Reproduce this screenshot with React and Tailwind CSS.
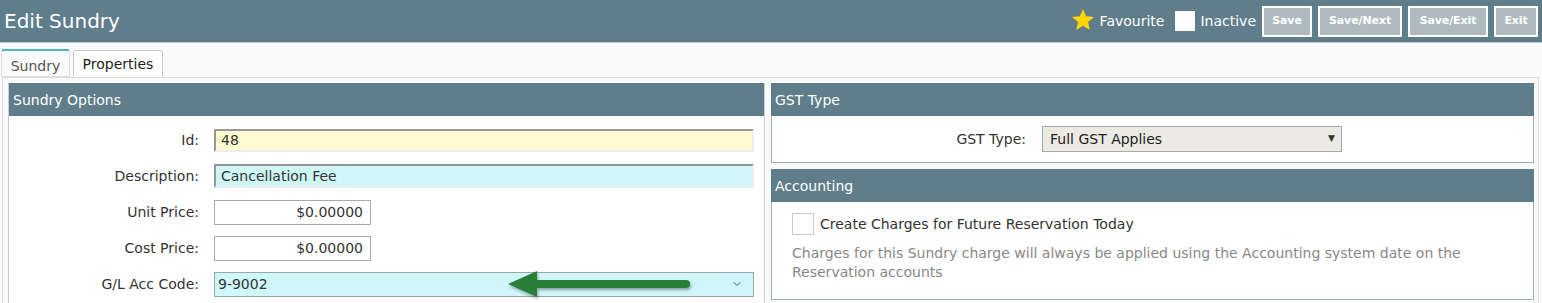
import { ChevronDown } from 'lucide-react';

const FONT = { fontFamily: '"DejaVu Sans", Verdana, sans-serif' };

function HeaderButton({ children, width }) {
  return (
    <button
      className={`h-[31px] border-2 border-white bg-[#afbbbf] text-white text-[11px] font-bold tracking-[-0.1px] ${width}`}
    >
      {children}
    </button>
  );
}

function PanelHeader({ children }) {
  return (
    <div className="h-[33px] bg-[#607d8b] text-white text-[14px] flex items-center px-[4px] pt-[2px]">
      {children}
    </div>
  );
}

function Row({ label, children }) {
  return (
    <div className="flex items-center h-[24px]">
      <div className="w-[190px] text-right text-[14px] text-[#333]">{label}</div>
      <div className="ml-[15px] flex-1">{children}</div>
    </div>
  );
}

function GreenArrow() {
  return (
    <svg className="absolute left-[291px] top-[-16px]" width="190" height="36" viewBox="0 0 190 36">
      <defs>
        <filter id="sh" x="-10%" y="-30%" width="130%" height="180%">
          <feDropShadow dx="1" dy="2" stdDeviation="1.5" floodColor="#000" floodOpacity="0.35" />
        </filter>
      </defs>
      <g filter="url(#sh)">
        <line x1="28" y1="16" x2="180" y2="16" stroke="#2a7f39" strokeWidth="8" strokeLinecap="round" />
        <polygon points="2,16 31,3 31,29" fill="#2a7f39" />
      </g>
    </svg>
  );
}

export default function App() {
  return (
    <div className="w-[1542px] h-[303px] overflow-hidden bg-[#fafafa]" style={FONT}>
      <div className="h-[43px] bg-[#607d8b] flex items-center pl-[4px] pr-[4px] border-b border-[#c5ccd0]">
        <h1 className="text-white text-[20px] flex-1">Edit Sundry</h1>
        <div className="flex items-center">
          <svg width="24" height="24" viewBox="0 0 24 24" className="mr-[5px] mt-[-2px]">
            <polygon
              points="12,1 15.1,8.3 23,8.9 17,14.1 18.8,21.9 12,17.8 5.2,21.9 7,14.1 1,8.9 8.9,8.3"
              fill="#ffd600"
            />
          </svg>
          <span className="text-white text-[14px] mr-[11px]">Favourite</span>
          <span className="w-[20px] h-[20px] bg-white mr-[5px]" />
          <span className="text-white text-[14px] mr-[6px]">Inactive</span>
          <div className="flex gap-[6px]">
            <HeaderButton width="w-[50px]">Save</HeaderButton>
            <HeaderButton width="w-[84px]">Save/Next</HeaderButton>
            <HeaderButton width="w-[80px]">Save/Exit</HeaderButton>
            <HeaderButton width="w-[44px]">Exit</HeaderButton>
          </div>
        </div>
      </div>

      <div className="pt-[6px] pl-[1px] flex gap-[3px] h-[34px] items-end">
        <div className="h-[28px] w-[69px] border border-[#ddd] border-t-2 border-t-[#4db6b8] rounded-t-[3px] bg-[#fafafa] text-[14px] text-[#555] flex items-center justify-center pt-[6px]">
          Sundry
        </div>
        <div className="h-[27px] w-[90px] border border-[#ccc] border-b-0 rounded-t-[3px] bg-white text-[14px] text-[#222] flex items-center justify-center">
          Properties
        </div>
      </div>

      <div className="mx-[2px] w-[1537px] border border-[#ddd] bg-[#fafafa] pl-[5px] pt-[5px] flex gap-[6px]">
        <div className="w-[757px] border-x border-[#c7ced1] bg-white">
          <PanelHeader>Sundry Options</PanelHeader>
          <div className="pt-[12px] pl-0 pr-[10px] flex flex-col gap-[12px] h-[200px]">
            <Row label="Id:">
              <div className="h-[23px] bg-[#fff9d1] border-t-2 border-l-2 border-[#999] border-r-2 border-b-2 border-r-[#eee] border-b-[#eee] text-[14px] text-[#333] px-[5px] flex items-center">
                48
              </div>
            </Row>
            <Row label="Description:">
              <div className="h-[24px] bg-[#cff6f9] border-t-2 border-l-2 border-[#999] border-r-2 border-b-2 border-r-[#eee] border-b-[#eee] text-[14px] text-[#333] px-[5px] flex items-center">
                Cancellation Fee
              </div>
            </Row>
            <Row label="Unit Price:">
              <div className="w-[157px] h-[25px] bg-white border border-[#aaa] text-[14px] text-[#333] px-[7px] flex items-center justify-end">
                $0.00000
              </div>
            </Row>
            <Row label="Cost Price:">
              <div className="w-[157px] h-[25px] bg-white border border-[#aaa] text-[14px] text-[#333] px-[7px] flex items-center justify-end">
                $0.00000
              </div>
            </Row>
            <Row label="G/L Acc Code:">
              <div className="relative h-[25px] bg-[#cff6f9] border border-[#9aa6a9] text-[14px] text-[#333] pl-[3px] pr-[10px] flex items-center">
                <span className="flex-1">9-9002</span>
                <ChevronDown size={12} strokeWidth={1.5} color="#333" />
                <div className="absolute left-0 top-1/2">
                  <GreenArrow />
                </div>
              </div>
            </Row>
          </div>
        </div>

        <div className="w-[763px] flex flex-col gap-[6px]">
          <div>
            <PanelHeader>GST Type</PanelHeader>
            <div className="h-[47px] border border-t-0 border-[#9eabaf] bg-white flex items-center">
              <div className="w-[254px] text-right text-[14px] text-[#333]">GST Type:</div>
              <div className="ml-[16px] w-[300px] h-[26px] bg-[#ebebe4] border border-[#a9a9a9] text-[14px] text-[#222] pl-[7px] pr-[6px] flex items-center">
                <span className="flex-1">Full GST Applies</span>
                <span className="text-[9px] text-[#333]">▼</span>
              </div>
            </div>
          </div>
          <div>
            <PanelHeader>Accounting</PanelHeader>
            <div className="h-[98px] border border-t-0 border-[#9eabaf] bg-white pl-[20px] pt-[11px]">
              <div className="flex items-center gap-[6px]">
                <span className="w-[22px] h-[22px] border border-[#ccc] bg-white" />
                <span className="text-[14px] text-[#333]">Create Charges for Future Reservation Today</span>
              </div>
              <p className="mt-[9px] text-[14px] text-[#888] leading-[19px] w-[720px]">
                Charges for this Sundry charge will always be applied using the Accounting system date on the Reservation accounts
              </p>
            </div>
          </div>
        </div>
      </div>
    </div>
  );
}
